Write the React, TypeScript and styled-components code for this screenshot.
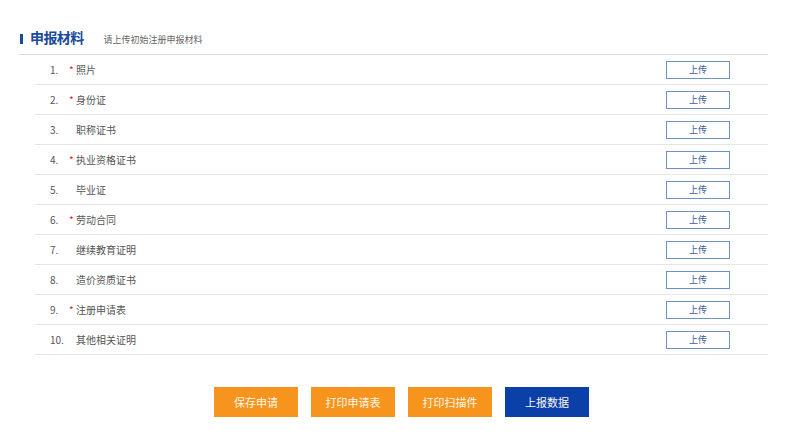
import styled, { createGlobalStyle } from "styled-components";

const GlobalStyle = createGlobalStyle`
  html, body {
    margin: 0;
    padding: 0;
    background: #ffffff;
  }
  body {
    font-family: "Noto Sans CJK SC", "Noto Sans", sans-serif;
    color: #555555;
  }
`;

const materials = [
  { name: "照片", required: true },
  { name: "身份证", required: true },
  { name: "职称证书", required: false },
  { name: "执业资格证书", required: true },
  { name: "毕业证", required: false },
  { name: "劳动合同", required: true },
  { name: "继续教育证明", required: false },
  { name: "造价资质证书", required: false },
  { name: "注册申请表", required: true },
  { name: "其他相关证明", required: false },
];

const actions = [
  { label: "保存申请", primary: false },
  { label: "打印申请表", primary: false },
  { label: "打印扫描件", primary: false },
  { label: "上报数据", primary: true },
];

const App = () => {
  return (
    <>
      <GlobalStyle />
      <Page>
        <Header>
          <TitleBar />
          <Title>申报材料</Title>
          <SubTitle>请上传初始注册申报材料</SubTitle>
        </Header>
        <List>
          {materials.map((item, i) => (
            <Row key={item.name}>
              <Index>{i + 1}.</Index>
              <Star>{item.required ? "*" : ""}</Star>
              <Name>{item.name}</Name>
              <UploadButton>上传</UploadButton>
            </Row>
          ))}
        </List>
        <Actions>
          {actions.map((a) => (
            <ActionButton key={a.label} $primary={a.primary}>
              {a.label}
            </ActionButton>
          ))}
        </Actions>
      </Page>
    </>
  );
};

export default App;

const Page = styled.div`
  width: 789px;
  padding: 27px 21px 0 19px;
  box-sizing: border-box;
`;

const Header = styled.div`
  display: flex;
  align-items: baseline;
  padding-bottom: 4px;
  padding-left: 1px;
  line-height: 20px;
  border-bottom: 1px solid #dcdcdc;
`;

const TitleBar = styled.span`
  display: inline-block;
  width: 3px;
  height: 10px;
  background: #1a4a9c;
  margin-right: 7px;
  align-self: center;
  margin-top: 0;
`;

const Title = styled.span`
  font-size: 14px;
  font-weight: 700;
  color: #1a4a9c;
  letter-spacing: -0.6px;
`;

const SubTitle = styled.span`
  font-size: 9px;
  color: #666666;
  margin-left: 20px;
`;

const List = styled.div`
  margin-left: 16px;
  display: flex;
  flex-direction: column;
`;

const Row = styled.div`
  display: flex;
  align-items: center;
  height: 29px;
  border-bottom: 1px solid #e6e6e6;
  font-size: 10px;
  color: #555555;
`;

const Index = styled.span`
  width: 19px;
  margin-left: 15px;
`;

const Star = styled.span`
  width: 7px;
  color: #d9232d;
  font-size: 10px;
`;

const Name = styled.span`
  flex: 1;
`;

const UploadButton = styled.button`
  width: 64px;
  height: 18px;
  margin-right: 38px;
  padding: 0;
  border: 1px solid #6f8fc8;
  background: #ffffff;
  color: #3d5b94;
  font-family: "Noto Sans CJK SC", sans-serif;
  font-size: 9px;
  line-height: 16px;
  cursor: pointer;
`;

const Actions = styled.div`
  margin-left: 16px;
  margin-top: 32px;
  display: flex;
  justify-content: center;
  gap: 13px;
`;

const ActionButton = styled.button<{ $primary: boolean }>`
  width: 84px;
  height: 30px;
  border: none;
  padding: 0;
  background: ${(p) => (p.$primary ? "#0b40a9" : "#f7941d")};
  color: #fff8ef;
  font-family: "Noto Sans CJK SC", sans-serif;
  font-size: 11px;
  cursor: pointer;
`;
